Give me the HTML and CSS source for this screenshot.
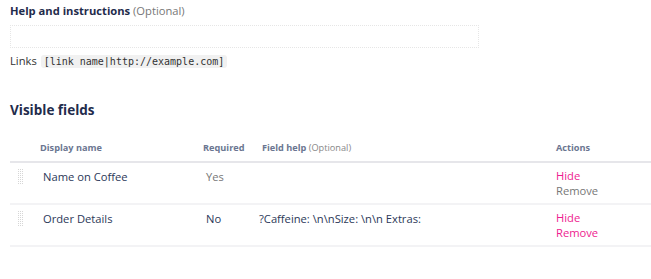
FILE: index.html
```html
<!DOCTYPE html>
<html lang="en">
<head>
    <meta charset="UTF-8">
    <title>Form fields</title>
    <link rel="stylesheet" href="styles.css">
</head>
<body>
    <div class="page">
        <div class="field">
            <label for="help"><b>Help and instructions</b> <span class="muted">(Optional)</span></label>
            <input type="text" id="help">
            <p class="hint">Links <code>[link name|http://example.com]</code></p>
        </div>

        <h2>Visible fields</h2>

        <table class="fields">
            <thead>
                <tr>
                    <th class="col-drag"></th>
                    <th class="col-name">Display name</th>
                    <th class="col-req">Required</th>
                    <th class="col-help">Field help <span class="muted">(Optional)</span></th>
                    <th class="col-actions">Actions</th>
                </tr>
            </thead>
            <tbody>
                <tr>
                    <td class="col-drag"><span class="handle"></span></td>
                    <td class="col-name">Name on Coffee</td>
                    <td class="col-req muted">Yes</td>
                    <td class="col-help"></td>
                    <td class="col-actions">
                        <a href="#" class="pink">Hide</a>
                        <a href="#" class="grey">Remove</a>
                    </td>
                </tr>
                <tr>
                    <td class="col-drag"><span class="handle"></span></td>
                    <td class="col-name">Order Details</td>
                    <td class="col-req">No</td>
                    <td class="col-help">?Caffeine: \n\nSize: \n\n Extras:</td>
                    <td class="col-actions">
                        <a href="#" class="pink">Hide</a>
                        <a href="#" class="pink">Remove</a>
                    </td>
                </tr>
            </tbody>
        </table>
    </div>
</body>
</html>
```

FILE: styles.css
```css
* {
    margin: 0;
    padding: 0;
    box-sizing: border-box;
}
body {
    font-family: "Open Sans", "Noto Sans", sans-serif;
    font-size: 11.2px;
    color: #2b3858;
    background-color: #fff;
}
.page {
    padding: 2px 0 0 10px;
}
.muted {
    color: #777;
    font-weight: normal;
}

.field label {
    display: block;
    line-height: 17px;
    margin-bottom: 6px;
}
.field label b {
    color: #1f2c4c;
}
.field input {
    display: block;
    width: 469px;
    height: 23px;
    border: 1px dotted #e6e6e6;
    outline: none;
}
.hint {
    margin-top: 4px;
    line-height: 18px;
    color: #333;
}
.hint code {
    font-family: "DejaVu Sans Mono", monospace;
    font-size: 10px;
    background-color: #f1f1f1;
    border-radius: 3px;
    padding: 1px 3px;
    margin-left: 1px;
    color: #333;
}

h2 {
    margin-top: 29px;
    font-size: 13.5px;
    color: #1f2c4c;
    line-height: 20px;
}

.fields {
    margin-top: 14px;
    width: 641px;
    border-collapse: collapse;
}
.fields th {
    text-align: left;
    font-size: 9.2px;
    color: #6b7691;
    font-weight: bold;
    padding: 7px 0 7px;
    border-bottom: 2px solid #e6e6ea;
}
.fields th .muted {
    color: #888;
}
.fields td {
    vertical-align: top;
    height: 42px;
    padding-top: 5px;
    border-bottom: 2px solid #f3f3f5;
}
.col-drag {
    width: 28px;
}
th.col-name {
    width: 163px;
    padding-left: 2px !important;
}
td.col-name {
    padding-left: 5px;
    padding-top: 6px !important;
}
th.col-req {
    width: 58px;
    padding-left: 2px !important;
}
td.col-req {
    padding-left: 5px;
    padding-top: 6px !important;
}
th.col-help {
    width: 297px;
    padding-left: 3px !important;
}
td.col-help {
    padding-top: 6px !important;
}
.col-actions a {
    display: block;
    text-decoration: none;
    line-height: 15px;
}
.pink {
    color: #ee1c8f;
}
.grey {
    color: #777;
}
.handle {
    display: block;
    margin-left: 7px;
    width: 7px;
    height: 16px;
    background:
        linear-gradient(#fff 1px, transparent 1px) 0 0 / 2px 2px,
        linear-gradient(90deg, #fff 1px, transparent 1px) 0 0 / 2px 2px,
        #d6d6d6;
}
```
